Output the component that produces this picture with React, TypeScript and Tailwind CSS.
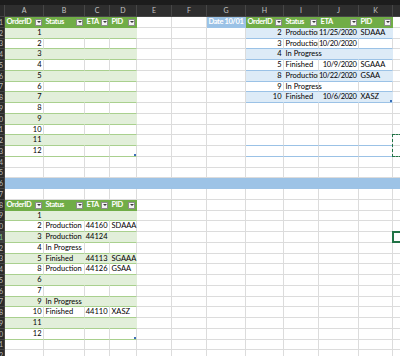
import React from "react";

type Cell = {
  text?: string;
  align?: "l" | "r";
  bold?: boolean;
  bg: string;
  bb: string;
  br: string;
  white?: boolean;
  filter?: boolean;
  over?: boolean;
  clip?: boolean;
  tight?: boolean;
  handle?: boolean;
  select?: boolean;
  marquee?: boolean;
};

const COLS = [
  { k: "A", w: "w-[39px]" },
  { k: "B", w: "w-[41px]" },
  { k: "C", w: "w-[25px]" },
  { k: "D", w: "w-[27px]" },
  { k: "E", w: "w-[35px]" },
  { k: "F", w: "w-[35px]" },
  { k: "G", w: "w-[39px]" },
  { k: "H", w: "w-[38px]" },
  { k: "I", w: "w-[35px]" },
  { k: "J", w: "w-[40px]" },
  { k: "K", w: "w-[34px]" },
  { k: "L", w: "w-[64px]" },
];

const HEIGHTS = ["h-[11px]", "h-[11px]", "h-[10px]", "h-[11px]"];

const S = {
  plain: { bg: "bg-white", bb: "border-b-[#dcdcdc]", br: "border-r-[#dcdcdc]" },
  gHdr: { bg: "bg-[#70ad47]", bb: "border-b-[#70ad47]", br: "border-r-[#70ad47]" },
  gBand: { bg: "bg-[#e2efda]", bb: "border-b-[#a9d08e]", br: "border-r-[#e2efda]" },
  gWhite: { bg: "bg-white", bb: "border-b-[#a9d08e]", br: "border-r-[#dcdcdc]" },
  bBand: { bg: "bg-[#ddebf7]", bb: "border-b-[#9bc2e6]", br: "border-r-[#ddebf7]" },
  bWhite: { bg: "bg-white", bb: "border-b-[#9bc2e6]", br: "border-r-[#dcdcdc]" },
  date: { bg: "bg-[#9bc2e6]", bb: "border-b-[#9bc2e6]", br: "border-r-[#9bc2e6]" },
  band: { bg: "bg-[#9dc3e6]", bb: "border-b-[#9dc3e6]", br: "border-r-[#9dc3e6]" },
  bLine: { bg: "bg-white", bb: "border-b-[#9bc2e6]", br: "border-r-[#dcdcdc]" },
};

const rightData = [
  ["2", "Production", "11/25/2020", "SDAAA"],
  ["3", "Production", "10/20/2020", ""],
  ["4", "In Progress", "", ""],
  ["5", "Finished", "10/9/2020", "SGAAA"],
  ["8", "Production", "10/22/2020", "GSAA"],
  ["9", "In Progress", "", ""],
  ["10", "Finished", "10/6/2020", "XASZ"],
];

const bottomData = [
  ["1", "", "", ""],
  ["2", "Production", "44160", "SDAAA"],
  ["3", "Production", "44124", ""],
  ["4", "In Progress", "", ""],
  ["5", "Finished", "44113", "SGAAA"],
  ["8", "Production", "44126", "GSAA"],
  ["6", "", "", ""],
  ["7", "", "", ""],
  ["9", "In Progress", "", ""],
  ["10", "Finished", "44110", "XASZ"],
  ["11", "", "", ""],
  ["12", "", "", ""],
];

const HDR = ["OrderID", "Status", "ETA", "PID"];

function getCell(r: number, c: number): Cell {
  if (r === 16) return { ...S.band };
  if (c <= 3) {
    if (r === 1 || r === 18) {
      return { ...S.gHdr, text: HDR[c], bold: true, white: true, align: "l", filter: true, tight: true };
    }
    if (r >= 2 && r <= 13) {
      const i = r - 2;
      const st = i % 2 === 0 ? S.gBand : S.gWhite;
      return {
        ...st,
        text: c === 0 ? String(i + 1) : undefined,
        align: "r",
        handle: r === 13 && c === 3,
      };
    }
    if (r >= 19 && r <= 30) {
      const i = r - 19;
      const st = i % 2 === 0 ? S.gBand : S.gWhite;
      const d = bottomData[i];
      return {
        ...st,
        text: d[c] || undefined,
        align: c === 0 || c === 2 ? "r" : "l",
        over: c === 1,
        handle: r === 30 && c === 3,
      };
    }
    return { ...S.plain };
  }
  if (c === 6 && r === 1) {
    return { ...S.date, text: "Date 10/01", bold: true, white: true, align: "l", tight: true };
  }
  if (c >= 7 && c <= 10) {
    const k = c - 7;
    if (r === 1) {
      return { ...S.gHdr, text: HDR[k], bold: true, white: true, align: "l", filter: true, tight: true };
    }
    if (r >= 2 && r <= 8) {
      const i = r - 2;
      const st = i % 2 === 0 ? S.bBand : S.bWhite;
      const d = rightData[i];
      return {
        ...st,
        text: d[k] || undefined,
        align: k === 0 || k === 2 ? "r" : "l",
        over: k === 1 && d[1] === "In Progress",
        clip: k === 1 && d[1] !== "In Progress",
        tight: k === 2,
        handle: r === 8 && k === 3,
      };
    }
    if (r === 12 || r === 13) return { ...S.bLine };
  }
  if (c === 11 && r === 21) return { ...S.plain, select: true };
  if (c === 11 && r === 12) return { ...S.plain, marquee: true };
  return { ...S.plain };
}

function Filter() {
  return (
    <span className="ml-auto mr-[1px] w-[7px] h-[7px] shrink-0 bg-[#f3f3f3] border border-[#8c8c8c] flex items-center justify-center">
      <span className="w-0 h-0 border-l-[2px] border-r-[2px] border-t-[2px] border-l-transparent border-r-transparent border-t-[#3a3a3a]" />
    </span>
  );
}

function CellView({ cell, w }: { cell: Cell; w: string }) {
  const justify = cell.align === "r" ? "justify-end" : "justify-start";
  return (
    <div
      className={`relative shrink-0 ${w} h-full border-r border-b ${cell.bg} ${cell.bb} ${cell.br} flex items-center ${justify} ${
        cell.clip ? "overflow-hidden" : ""
      }`}
    >
      {cell.text && (
        <span
          className={`whitespace-nowrap leading-none ${cell.align === "r" ? "pr-[1.5px]" : "pl-[1.5px]"} ${
            cell.bold ? "font-bold" : ""
          } ${cell.tight ? "tracking-[-0.4px]" : ""} ${cell.white ? "text-white" : "text-black"} ${
            cell.over ? "relative z-10" : ""
          }`}
        >
          {cell.text}
        </span>
      )}
      {cell.filter && <Filter />}
      {cell.handle && (
        <span className="absolute right-0 bottom-0 w-[2px] h-[2px] bg-[#3b6fb6] z-10" />
      )}
      {cell.select && (
        <span className="absolute left-[-1px] top-[-1px] w-[10px] h-[12px] border-2 border-[#217346] z-20" />
      )}
      {cell.marquee && (
        <span className="absolute left-[-1px] top-[-1px] w-[10px] h-[23px] border border-dashed border-[#217346] z-20" />
      )}
    </div>
  );
}

export default function App() {
  const rows = Array.from({ length: 32 }, (_, i) => i + 1);
  return (
    <div className="w-[400px] h-[356px] overflow-hidden bg-white font-[Lato,sans-serif] text-[7.5px]">
      <div className="h-[5px] bg-[#1c1c1c]" />
      <div className="flex h-[12px] bg-[#2e2e2e]">
        <div className="w-[5px] shrink-0 h-full border-r border-b border-[#464646] bg-[#2a2a2a]" />
        {COLS.map((c) => (
          <div
            key={c.k}
            className={`${c.w} shrink-0 h-full border-r border-b border-[#464646] flex items-center justify-center text-[#c4c4c4] text-[7px]`}
          >
            {c.k}
          </div>
        ))}
      </div>
      {rows.map((r) => (
        <div key={r} className={`flex ${HEIGHTS[(r - 1) % 4]}`}>
          <div
            className={`w-[5px] shrink-0 h-full border-r border-b border-[#444444] ${
              r === 21 ? "bg-[#3d3d3d] text-[#7fc99a]" : "bg-[#2a2a2a] text-[#b8b8b8]"
            } overflow-hidden flex items-center justify-end text-[7px]`}
          >
            <span className="whitespace-nowrap pr-[1px] leading-none">{r}</span>
          </div>
          {COLS.map((c, ci) => (
            <CellView key={c.k} cell={getCell(r, ci)} w={c.w} />
          ))}
        </div>
      ))}
    </div>
  );
}
